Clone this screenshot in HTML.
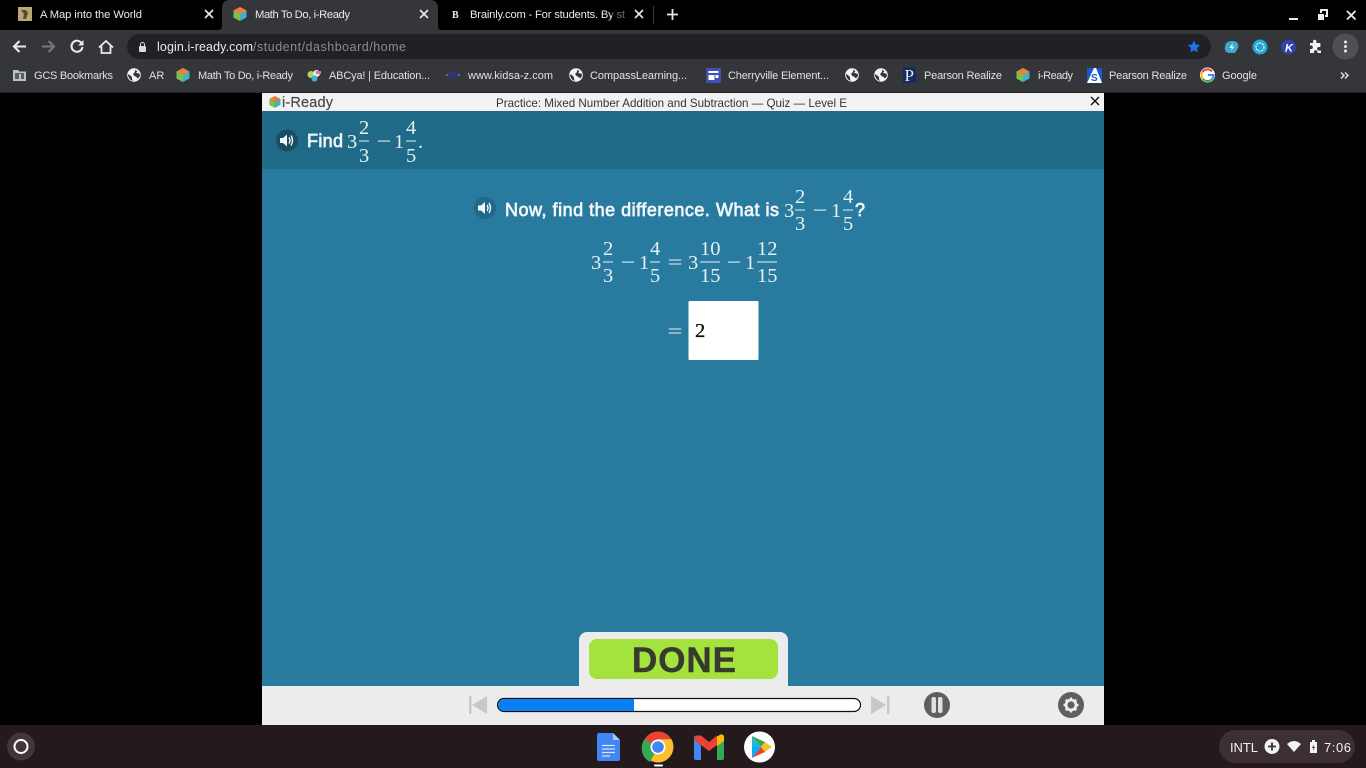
<!DOCTYPE html>
<html><head><meta charset="utf-8"><title>Math To Do, i-Ready</title>
<style>
html,body{margin:0;padding:0;background:#000;width:1366px;height:768px;overflow:hidden}
svg{display:block}
text{font-family:"Liberation Sans",sans-serif}
.t{font-size:11.2px;fill:#e8eaed}
.b{font-size:11px;fill:#dfe1e4}
.m{font-family:"Liberation Serif",serif;font-size:20.5px;fill:#e6f0f4}
.h{font-size:18px;fill:#f2f7f9;stroke:#f2f7f9;stroke-width:.7px}
</style></head><body>
<svg width="1366" height="768" viewBox="0 0 1366 768" xmlns="http://www.w3.org/2000/svg">
<defs>
<g id="cube"><path d="M7 0L13.500 3.500V10.500L7 14L.5 10.500V3.500Z" fill="#3fb3c0"/><path d="M7 0L13.500 3.500L7 7L.5 3.500Z" fill="#ee7f36"/><path d="M.5 3.500L7 7V14L.5 10.500Z" fill="#7cc04b"/></g>
<g id="globe"><circle cx="7" cy="7" r="6.800" fill="#f1f3f4"/><path d="M1.500 6L5 9V11L6 13L3 11.500L1 8ZM8 2L10.500 3L9 4.500L11 5.500L12.500 5.500L13 8L11 10.500L9.500 9L7.500 8L6 6L8 4Z" fill="#35363a"/></g>
<g id="spk"><path d="M-7 -2.500H-4L0 -6V6L-4 2.500H-7Z" fill="#f4f8fa"/><path d="M2 -3Q4 0 2 3M4 -5Q7 0 4 5" stroke="#f4f8fa" stroke-width="1.400" fill="none"/></g>
</defs>

<rect width="1366" height="768" fill="#000"/>
<!-- tab strip -->
<path d="M218 30Q222 30 222 26V8Q222 0 230 0H430Q438 0 438 8V26Q438 30 442 30Z" fill="#35363a"/>
<rect x="18" y="7" width="14" height="14" fill="#b8a878"/><path d="M21 10h5l2 3-2 6h-3l1-5z" fill="#5c4a2a"/>
<text class="t" x="40" y="18" textLength="102">A Map into the World</text>
<path d="M205 10l8 8m0-8l-8 8M420 10l8 8m0-8l-8 8M635 10l8 8m0-8l-8 8" stroke="#e8eaed" stroke-width="1.600"/>
<use href="#cube" x="233" y="7"/>
<text class="t" x="255" y="18" textLength="95">Math To Do, i-Ready</text>
<text x="452" y="18" style="font-family:'Liberation Serif',serif;font-weight:bold;font-size:10px;fill:#e8eaed">B</text>
<text class="t" x="470" y="18" textLength="155">Brainly.com - For students. By st</text>
<rect x="612" y="6" width="16" height="16" fill="#000" opacity=".55"/>
<rect x="653" y="6" width="1" height="18" fill="#3c3d40"/>
<path d="M667 14.500h11M672.500 9v11" stroke="#e8eaed" stroke-width="1.800"/>
<!-- window controls -->
<rect x="1289" y="18" width="9" height="2" fill="#e8eaed"/>
<rect x="1318" y="14" width="6" height="6" fill="#e8eaed"/>
<path d="M1321 13v-3h6v6h-2" stroke="#e8eaed" stroke-width="2" fill="none"/>
<path d="M1347 11l8.500 8.500m0-8.500l-8.500 8.500" stroke="#e8eaed" stroke-width="1.800"/>

<!-- toolbar -->
<rect y="30" width="1366" height="63" fill="#35363a"/>
<rect y="92" width="1366" height="1" fill="#222"/>
<path d="M26 46.500H14M19.500 41L14 46.500L19.500 52" stroke="#e8eaed" stroke-width="2.100" fill="none"/>
<path d="M42 46.500H54M48.500 41L54 46.500L48.500 52" stroke="#77787a" stroke-width="2.100" fill="none"/>
<path d="M81.500 43A5.500 5.500 0 1 0 82.500 47" stroke="#e8eaed" stroke-width="2.100" fill="none"/><path d="M83.500 40V45.500H78Z" fill="#e8eaed"/>
<path d="M99 47.500L106 41L113 47.500M101.500 46V53H110.500V46" stroke="#e8eaed" stroke-width="1.800" fill="none"/>
<rect x="127" y="34" width="1084" height="25" rx="12.500" fill="#202124"/>
<rect x="139" y="46" width="7" height="6" rx="1" fill="#d8dadd"/><path d="M140.500 46v-1.500a2 2 0 0 1 4 0V46" stroke="#d8dadd" fill="none"/>
<text x="157" y="51" style="font-size:12.500px;fill:#e8eaed" textLength="96">login.i-ready.com</text>
<text x="253" y="51" style="font-size:12.500px;fill:#8b8d90" textLength="153">/student/dashboard/home</text>
<path d="M1194 40.500l1.900 4 4.300.5-3.200 3 .8 4.400-3.800-2.200-3.800 2.200.8-4.400-3.200-3 4.300-.5z" fill="#1a73e8"/>
<!-- extensions -->
<path d="M1225 47a6 6 0 0 1 6-6h3a5 5 0 0 1 4 7l-3 5h-6a4.500 4.500 0 0 1-4-6z" fill="#3aa7cc"/><path d="M1233 42.500l-3.500 5.500h2.500l-1.500 3.500 4-5h-2.500z" fill="#e8f4f8"/>
<circle cx="1260" cy="47" r="7.500" fill="#26a9d6"/><circle cx="1260" cy="47" r="4" fill="#2b9fd0" stroke="#c6eef8" stroke-width="1.500" stroke-dasharray="2 1"/>
<circle cx="1288.500" cy="47" r="7.500" fill="#3143a8"/><text x="1285" y="51.500" style="font-size:11px;font-weight:bold;font-style:italic;fill:#fff">K</text>
<path d="M1310 43h3v-1.500a1.700 1.700 0 0 1 3.400 0V43h4v4h-1.500a1.800 1.800 0 0 0 0 3.600H1321V53h-3.500v-1a1.800 1.800 0 0 0-3.600 0v1H1310v-4h1a1.800 1.800 0 0 0 0-3.600h-1z" fill="#f1f3f4"/>
<circle cx="1345.500" cy="46.500" r="13" fill="#4f5054"/>
<circle cx="1345.500" cy="42" r="1.500" fill="#e8eaed"/><circle cx="1345.500" cy="46.500" r="1.500" fill="#e8eaed"/><circle cx="1345.500" cy="51" r="1.500" fill="#e8eaed"/>

<!-- bookmarks -->
<path d="M13 70h5l1.500 1.500H26V81H13Z" fill="#bdc1c6"/><rect x="15" y="73" width="9" height="6" fill="#5a5b5f"/><rect x="19" y="74" width="2" height="5" fill="#bdc1c6"/>
<text class="b" x="34" y="79" textLength="79">GCS Bookmarks</text>
<use href="#globe" x="127" y="68"/><text class="b" x="149" y="79">AR</text>
<use href="#cube" x="176" y="68"/><text class="b" x="198" y="79" textLength="95">Math To Do, i-Ready</text>
<g><circle cx="311" cy="74.500" r="3.500" fill="#a9d66b"/><circle cx="316.500" cy="73.500" r="3.500" fill="#f0e8d8"/><circle cx="314.500" cy="78.500" r="3" fill="#3fb6c6"/><rect x="316" y="71" width="5" height="3" fill="#d86fbf"/></g>
<text class="b" x="329" y="79" textLength="101">ABCya! | Education...</text>
<ellipse cx="453" cy="75" rx="7" ry="3.500" fill="#30356e"/><circle cx="447" cy="75" r="1" fill="#77789a"/><circle cx="459" cy="75" r="1" fill="#77789a"/>
<text class="b" x="468" y="79" textLength="85">www.kidsa-z.com</text>
<use href="#globe" x="569" y="68"/><text class="b" x="590" y="79" textLength="97">CompassLearning...</text>
<rect x="706" y="68" width="15" height="15" rx="1" fill="#3f51b5"/><rect x="708.500" y="71" width="10" height="2" fill="#fff"/><rect x="708.500" y="75" width="6" height="5" fill="#fff"/><rect x="715.500" y="75" width="3" height="3" fill="#fff"/>
<text class="b" x="728" y="79" textLength="101">Cherryville Element...</text>
<use href="#globe" x="845" y="68"/><use href="#globe" x="874" y="68"/>
<rect x="903" y="67" width="13" height="16" fill="#152a5e"/><text x="904.500" y="81" style="font-family:'Liberation Serif',serif;font-size:17px;fill:#e6e8f4">P</text>
<text class="b" x="924" y="79" textLength="78">Pearson Realize</text>
<use href="#cube" x="1016" y="68"/><text class="b" x="1038" y="79" textLength="35">i-Ready</text>
<rect x="1087" y="68" width="15" height="15" fill="#1f57c9"/><path d="M1094 68h2l6 15h-15z" fill="#fff"/><text x="1091" y="81" style="font-size:10px;font-weight:bold;fill:#1f57c9">S</text>
<text class="b" x="1109" y="79" textLength="78">Pearson Realize</text>
<circle cx="1207.500" cy="75" r="7.500" fill="#fff"/>
<path d="M1212 71.500A6 6 0 0 0 1202.500 72" stroke="#ea4335" stroke-width="2" fill="none"/><path d="M1202.500 72A6 6 0 0 0 1203 79" stroke="#fbbc05" stroke-width="2" fill="none"/><path d="M1203 79A6 6 0 0 0 1212 79" stroke="#34a853" stroke-width="2" fill="none"/><path d="M1208 75H1213.500A6 6 0 0 1 1212 79" stroke="#4285f4" stroke-width="2" fill="none"/>
<text class="b" x="1222" y="79" textLength="35">Google</text>
<path d="M1341 72.500l3 3-3 3M1345 72.500l3 3-3 3" stroke="#e8eaed" stroke-width="1.400" fill="none"/>

<!-- app -->
<rect x="262" y="93" width="842" height="632" fill="#ececec"/>
<rect x="262" y="93" width="842" height="18" fill="#f2f2f2"/>
<use href="#cube" transform="translate(269 96) scale(.85)"/>
<text x="282" y="107" style="font-size:14.500px;fill:#4a4a4a;stroke:#4a4a4a;stroke-width:.2px" textLength="51">i-Ready</text>
<text x="496" y="107" style="font-size:11.600px;fill:#333" textLength="351">Practice: Mixed Number Addition and Subtraction — Quiz — Level E</text>
<path d="M1091 97l8 8m0-8l-8 8" stroke="#111" stroke-width="1.400"/>
<rect x="262" y="111" width="842" height="58" fill="#1f6a86"/>
<rect x="262" y="169" width="842" height="517" fill="#287a9e"/>

<!-- header question -->
<circle cx="287" cy="140.500" r="11" fill="#184d64"/><use href="#spk" x="287" y="140.500"/>
<text class="h" x="307" y="147" textLength="36">Find</text>
<text class="m" x="347" y="148">3</text>
<text class="m" x="359" y="134">2</text><rect x="359" y="140.500" width="10" height="1" fill="#e6f0f4"/><text class="m" x="359" y="162">3</text>
<text class="m" x="376.500" y="148" textLength="15" lengthAdjust="spacingAndGlyphs">−</text>
<text class="m" x="394" y="148">1</text>
<text class="m" x="406" y="134">4</text><rect x="406" y="140.500" width="10" height="1" fill="#e6f0f4"/><text class="m" x="406" y="162">5</text>
<text class="m" x="418" y="148">.</text>

<!-- question -->
<circle cx="485" cy="208" r="11" fill="#1f6a86"/><use href="#spk" x="485" y="208"/>
<text class="h" x="505" y="216" textLength="274">Now, find the difference. What is</text>
<text class="m" x="784" y="217">3</text>
<text class="m" x="795" y="203">2</text><rect x="795" y="209.500" width="10" height="1" fill="#e6f0f4"/><text class="m" x="795" y="230">3</text>
<text class="m" x="812.500" y="217" textLength="15" lengthAdjust="spacingAndGlyphs">−</text>
<text class="m" x="831" y="217">1</text>
<text class="m" x="843" y="203">4</text><rect x="843" y="209.500" width="10" height="1" fill="#e6f0f4"/><text class="m" x="843" y="230">5</text>
<text class="h" x="855" y="216">?</text>

<!-- equation -->
<text class="m" x="591" y="269">3</text>
<text class="m" x="603" y="255">2</text><rect x="603" y="261.500" width="10" height="1" fill="#e6f0f4"/><text class="m" x="603" y="282">3</text>
<text class="m" x="620.500" y="269" textLength="15" lengthAdjust="spacingAndGlyphs">−</text>
<text class="m" x="639" y="269">1</text>
<text class="m" x="650" y="255">4</text><rect x="650" y="261.500" width="10" height="1" fill="#e6f0f4"/><text class="m" x="650" y="282">5</text>
<text class="m" x="667.500" y="269" textLength="15" lengthAdjust="spacingAndGlyphs">=</text>
<text class="m" x="688" y="269">3</text>
<text class="m" x="700" y="255">10</text><rect x="700" y="261.500" width="20" height="1" fill="#e6f0f4"/><text class="m" x="700" y="282">15</text>
<text class="m" x="726.500" y="269" textLength="15" lengthAdjust="spacingAndGlyphs">−</text>
<text class="m" x="745" y="269">1</text>
<text class="m" x="757" y="255">12</text><rect x="757" y="261.500" width="20" height="1" fill="#e6f0f4"/><text class="m" x="757" y="282">15</text>

<text class="m" x="667.500" y="338" textLength="15" lengthAdjust="spacingAndGlyphs">=</text>
<rect x="688.500" y="301" width="70" height="59" rx="1" fill="#fff"/>
<text x="695" y="337" style="font-family:'Liberation Serif',serif;font-size:20.500px;fill:#111;stroke:#111;stroke-width:.3px">2</text>

<!-- done -->
<path d="M579 686V640a8 8 0 0 1 8-8H780a8 8 0 0 1 8 8V686Z" fill="#ececec"/>
<rect x="589" y="639" width="189" height="40" rx="8" fill="#a4e23e"/>
<text x="632" y="672" style="font-size:35px;font-weight:bold;fill:#373a2e;stroke:#373a2e;stroke-width:.4px" textLength="104">DONE</text>

<!-- controls -->
<rect x="469" y="696" width="2.500" height="18" fill="#c8c8c8"/><path d="M487 696V714L472 705Z" fill="#c8c8c8"/>
<rect x="497.500" y="698.500" width="363" height="13" rx="6.500" fill="#fff" stroke="#111" stroke-width="1.200"/>
<path d="M634 699H504a6 6 0 0 0 0 12H634Z" fill="#0a7ff2"/>
<rect x="887" y="696" width="2.500" height="18" fill="#c8c8c8"/><path d="M871 696V714L886 705Z" fill="#c8c8c8"/>
<circle cx="937" cy="705" r="13" fill="#5f5f5f"/><rect x="931.500" y="697" width="4.500" height="16" rx="2" fill="#e0e0e0"/><rect x="938" y="697" width="4.500" height="16" rx="2" fill="#e0e0e0"/>
<circle cx="1071" cy="705" r="13" fill="#5f5f5f"/>
<circle cx="1071" cy="705" r="5" fill="none" stroke="#ececec" stroke-width="2.800"/>
<path d="M1071 697.500v3M1071 709.500v3M1063.500 705h3M1075.500 705h3M1065.700 699.700l2.100 2.100M1074.200 708.200l2.100 2.100M1065.700 710.300l2.100-2.100M1074.200 701.800l2.100-2.100" stroke="#ececec" stroke-width="2.200"/>

<!-- shelf -->
<rect y="725" width="1366" height="43" fill="#241a1c"/>
<circle cx="21" cy="746.500" r="14" fill="#413639"/><circle cx="21" cy="746.500" r="6.500" fill="none" stroke="#fff" stroke-width="2"/>
<path d="M599 733H613L620 740V759a2 2 0 0 1-2 2H599a2 2 0 0 1-2-2V735a2 2 0 0 1 2-2Z" fill="#4285f4"/><path d="M613 733L620 740H613Z" fill="#a8c7fa"/>
<path d="M602 745.500h13M602 749h13M602 752.500h13M602 756h8" stroke="#d6e4fc" stroke-width="1.200"/>
<circle cx="658" cy="747" r="15.500" fill="#ea4335"/>
<path d="M658 747L644.600 739.300A15.500 15.500 0 0 0 650.300 760.400Z" fill="#34a853"/>
<path d="M658 747L650.300 760.400A15.500 15.500 0 0 0 671.400 739.300L658 739.300Z" fill="#fbc02d"/>
<path d="M650 762L658 747L644 740A15.500 15.500 0 0 0 650 762Z" fill="#34a853"/>
<circle cx="658" cy="747" r="7.500" fill="#fff"/><circle cx="658" cy="747" r="5.800" fill="#4285f4"/>
<rect x="654" y="764.500" width="9" height="2" rx="1" fill="#fff"/>
<path d="M694 735V758a2 2 0 0 0 2 2H701V746Z" fill="#4285f4"/>
<path d="M724 735V758a2 2 0 0 1-2 2H717V746Z" fill="#34a853"/>
<path d="M694 740L709 751L724 740L717 735.500L709 742L701 735.500L696 735.500Z" fill="#ea4335"/>
<path d="M717 746V737L720 734.500Q724 733.500 724 738V741Z" fill="#fbbc04"/>
<circle cx="759.500" cy="747" r="15.500" fill="#fff"/>
<path d="M752 736V747H761Z" fill="#22b8cf"/><path d="M752 758V747H761Z" fill="#00b0ff"/>
<path d="M752 736L761 747L765 742Z" fill="#34a853"/><path d="M752 758L761 747L765 752Z" fill="#ea4335"/>
<path d="M765 742L772 747L765 752L761 747Z" fill="#fbc02d"/>
<rect x="1219" y="730" width="136" height="33" rx="16.500" fill="#3c3033"/>
<text x="1230" y="752" style="font-size:13px;fill:#f1f3f4" textLength="28">INTL</text>
<circle cx="1272" cy="746.500" r="7.500" fill="#f1f3f4"/><path d="M1268 746.500h8M1272 742.500v8" stroke="#3c3033" stroke-width="1.800"/>
<path d="M1287 744Q1294 738 1301 744L1294 752Z" fill="#f1f3f4"/>
<rect x="1310" y="742" width="7" height="11" fill="#f1f3f4"/><rect x="1312" y="740" width="3" height="2" fill="#f1f3f4"/><path d="M1314 744l-2 4h1.500l-.5 3 2-4h-1.500z" fill="#3c3033"/>
<text x="1324" y="752" style="font-size:13px;fill:#f1f3f4" textLength="27">7:06</text>
</svg>
</body></html>
